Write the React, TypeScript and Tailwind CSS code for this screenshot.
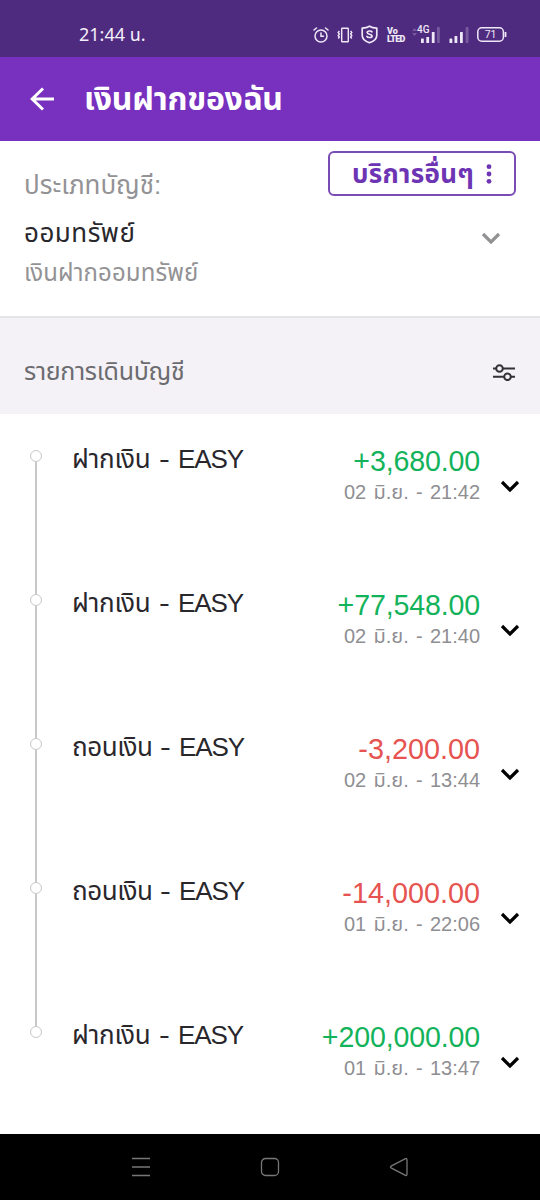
import React from "react";

interface Transaction {
  title: string;
  action: string;
  amount: string;
  date: string;
  incoming: boolean;
}

const transactions: Transaction[] = [
  { title: "ฝากเงิน", action: "EASY", amount: "+3,680.00", date: "02 มิ.ย. - 21:42", incoming: true },
  { title: "ฝากเงิน", action: "EASY", amount: "+77,548.00", date: "02 มิ.ย. - 21:40", incoming: true },
  { title: "ถอนเงิน", action: "EASY", amount: "-3,200.00", date: "02 มิ.ย. - 13:44", incoming: false },
  { title: "ถอนเงิน", action: "EASY", amount: "-14,000.00", date: "01 มิ.ย. - 22:06", incoming: false },
  { title: "ฝากเงิน", action: "EASY", amount: "+200,000.00", date: "01 มิ.ย. - 13:47", incoming: true },
];

const StatusIcons: React.FC = () => (
  <div className="flex items-center h-5 text-[#efe9f7]">
    {/* Alarm */}
    <svg className="w-4 h-[18px]" viewBox="0 0 16 18" fill="none" stroke="currentColor" strokeWidth="1.5" strokeLinecap="round">
      <circle cx="8" cy="10" r="6" />
      <path d="M8 7v3.3h2.5M1 4l2.5-2M15 4l-2.5-2" />
    </svg>
    {/* Vibrate */}
    <svg className="w-4 h-4 ml-2" viewBox="0 0 16 16" fill="none" stroke="currentColor" strokeWidth="1.4">
      <rect x="4.7" y="1.2" width="6.6" height="13.6" rx="0.5" />
      <path d="M2.4 4l-1.2 1.5 1.2 1.5-1.2 1.5 1.2 1.5-1.2 1.5M13.6 4l1.2 1.5-1.2 1.5 1.2 1.5-1.2 1.5 1.2 1.5" />
    </svg>
    {/* Shield */}
    <svg className="w-[17px] h-[19px] ml-2" viewBox="0 0 17 19" fill="none" stroke="currentColor" strokeWidth="1.7" strokeLinejoin="round">
      <path d="M8.5 1.2C6.5 2.4 4 3 1.2 3.2v7c0 3.8 3.2 6.2 7.3 7.6 4.1-1.4 7.3-3.8 7.3-7.6v-7C13 3 10.5 2.4 8.5 1.2z" />
      <path d="M11 6.8c-.5-1-4.8-1.3-4.8.7 0 2.2 4.9 1.2 4.9 3.5 0 2-4.5 1.8-5.2.4" strokeLinecap="round" />
    </svg>
    <div className="ml-[9px] w-[18px] font-['Roboto'] text-[9px] leading-[8px] font-black">
      <div>Vo</div>
      <div className="tracking-[-0.7px]">LTED</div>
    </div>
    {/* Signal bars */}
    <div className="relative ml-[7px] w-[28px] h-[17px]">
      <svg className="w-[28px] h-[17px]" viewBox="0 0 28 17" fill="currentColor">
        <path d="M0 5l2.5-3L5 5zM0 7l2.5 3L5 7z" opacity="0.25" />
        <rect x="9" y="12.5" width="2.8" height="4.5" rx="0.5" />
        <rect x="14.3" y="11" width="2.8" height="6" rx="0.5" />
        <rect x="19.8" y="6" width="2.8" height="11" rx="0.5" />
        <rect x="25" y="1" width="2.8" height="16" rx="0.5" opacity="0.25" />
      </svg>
      <span className="absolute left-[5px] -top-px font-['Roboto'] text-[10px] leading-[10px] font-medium">4G</span>
    </div>
    <svg className="w-[20px] h-[17px] ml-[9px]" viewBox="0 0 20 17" fill="currentColor">
      <rect x="0.5" y="12.5" width="2.8" height="4.5" rx="0.5" />
      <rect x="5.5" y="10" width="2.8" height="7" rx="0.5" />
      <rect x="11" y="6" width="2.8" height="11" rx="0.5" />
      <rect x="16.7" y="1" width="2.8" height="16" rx="0.5" opacity="0.25" />
    </svg>
    {/* Battery */}
    <svg className="ml-2 w-[30px] h-[15px]" viewBox="0 0 30 15" fill="none" stroke="currentColor" strokeWidth="1.5">
      <rect x="0.8" y="0.8" width="25.6" height="13.4" rx="4" />
      <path d="M28.5 5v5" strokeWidth="1.8" />
      <text x="13.6" y="11.3" textAnchor="middle" fill="currentColor" stroke="none" className="font-['Roboto'] text-[10.5px]">
        71
      </text>
    </svg>
  </div>
);

const Chevron: React.FC<{ className: string }> = ({ className }) => (
  <svg className={className} viewBox="0 0 20 12" fill="none" stroke="currentColor" strokeWidth="3.2">
    <path d="M2 2l8 8 8-8" />
  </svg>
);

const TransactionRow: React.FC<{ item: Transaction; isLast: boolean }> = ({ item, isLast }) => (
  <div className={`flex ${isLast ? "h-[102px]" : "h-36"}`}>
    {/* Timeline */}
    <div className="w-3 ml-[30px] flex flex-col items-center">
      <div className="w-3 h-3 shrink-0 rounded-full border-[1.5px] border-[#c8c8ca]" />
      {!isLast && <div className="w-[1.5px] flex-1 bg-[#c8c8ca]" />}
    </div>
    <div className="ml-[30px] -mt-[17px] flex-1 flex justify-between">
      <p className="flex text-[26px] leading-[52px] h-[52px] text-[#29272c] whitespace-nowrap">
        <span className={item.incoming ? "w-[87px] tracking-[-0.2px]" : "w-[88px] tracking-[-0.4px]"}>
          {item.title}
        </span>
        <span className="w-[19px] origin-left scale-x-125">-</span>
        <span className="tracking-[-1.1px]">{item.action}</span>
      </p>
      <div className="text-right whitespace-nowrap">
        <p
          className={`mt-2 leading-[40px] ${
            item.incoming
              ? "text-[28.6px] tracking-[-0.15px] text-[#13b35b]"
              : "text-[28.8px] text-[#e75350]"
          }`}
        >
          {item.amount}
        </p>
        <p className="-mt-px text-[20px] leading-[24px] [word-spacing:1.7px] text-[#8f8e93]">{item.date}</p>
      </div>
    </div>
    <Chevron className="w-5 h-3 ml-5 mr-5 mt-[30px] text-black" />
  </div>
);

const App: React.FC = () => {
  return (
    <div className="w-[540px] h-[1200px] flex flex-col overflow-hidden bg-white font-['Liberation_Sans','Noto_Sans_Thai',sans-serif]">
      <div className="h-[57px] shrink-0 bg-[#4f2b80] pt-[12px] pl-[79px] pr-[33px] flex items-center justify-between">
        <span className="font-['Noto_Sans','Noto_Sans_Thai',sans-serif] text-[18px] leading-5 -mt-0.5 text-[#f4effa]">21:44 น.</span>
        <StatusIcons />
      </div>

      <header className="h-[84px] shrink-0 bg-[#7830be] flex items-center pl-[30px] text-white">
        <svg className="w-6 h-6" viewBox="0 0 24 24" fill="none" stroke="currentColor" strokeWidth="3">
          <path d="M24 12H2M13 1.5L2.2 12 13 22.5" />
        </svg>
        <h1 className="ml-[30px] text-[32px] leading-[60px] font-bold tracking-[-0.25px] whitespace-nowrap">เงินฝากของฉัน</h1>
      </header>

      <section className="h-[177px] shrink-0 px-6 flex justify-between border-b-2 border-[#e5e4e8]">
        <div className="pt-[22px] whitespace-nowrap">
          <p className="text-[26px] leading-[44px] text-[#939295]">ประเภทบัญชี:</p>
          <p className="mt-1 text-[26px] leading-[44px] tracking-[0.5px] text-[#29272c]">ออมทรัพย์</p>
          <p className="text-[24px] leading-[36px] tracking-[0.1px] text-[#939295]">เงินฝากออมทรัพย์</p>
        </div>
        <div className="pt-[10px] flex flex-col items-end">
          <button className="w-[188px] h-[45px] rounded-[6px] border-2 border-[#7a4ab5] flex items-center pl-[22px] text-[#6d34b3]">
            <span className="w-[123px] text-left text-[26px] leading-[42px] font-bold tracking-[0.3px] whitespace-nowrap">บริการอื่นๆ</span>
            <svg className="w-[6px] h-5 ml-[11px]" viewBox="0 0 6 20" fill="currentColor">
              <circle cx="3" cy="2.7" r="2.4" />
              <circle cx="3" cy="10" r="2.4" />
              <circle cx="3" cy="17.3" r="2.4" />
            </svg>
          </button>
          <Chevron className="w-[20px] h-[12px] mt-9 mr-[15px] text-[#929194]" />
        </div>
      </section>

      <section className="h-[96px] shrink-0 bg-[#f4f2f6] px-6 flex items-center justify-between">
        <h2 className="pt-[9px] text-[25px] leading-[44px] tracking-[-0.3px] text-[#6c6b70] whitespace-nowrap">รายการเดินบัญชี</h2>
        <svg className="w-[23px] h-[17px] mt-[12px] mr-px" viewBox="0 0 23 17" fill="none" stroke="#333137" strokeWidth="2">
          <path d="M1 4.5h3M11 4.5h12M1 12.8h11M19 12.8h4" />
          <circle cx="7.5" cy="4.5" r="3.3" />
          <circle cx="15.5" cy="12.8" r="3.3" />
        </svg>
      </section>

      <main className="flex-1 pt-9">
        {transactions.map((item, index) => (
          <TransactionRow key={index} item={item} isLast={index === transactions.length - 1} />
        ))}
      </main>

      <nav className="h-[66px] shrink-0 bg-black flex items-center justify-between px-[131px] text-[#777]">
        <svg className="w-5 h-5" viewBox="0 0 20 20" fill="none" stroke="currentColor" strokeWidth="1.3">
          <path d="M1 1.5h18M1 10h18M1 18.5h18" />
        </svg>
        <svg className="w-5 h-5" viewBox="0 0 20 20" fill="none" stroke="currentColor" strokeWidth="1.3">
          <rect x="1.5" y="1.5" width="17" height="17" rx="4" />
        </svg>
        <svg className="w-5 h-5" viewBox="0 0 20 20" fill="none" stroke="currentColor" strokeWidth="1.3" strokeLinejoin="round">
          <path d="M2 9.2L16.5 1.6Q18 1 18 3v14q0 2-1.5 1.3L2 10.8Q1 10 2 9.2z" />
        </svg>
      </nav>
    </div>
  );
};

export default App;
